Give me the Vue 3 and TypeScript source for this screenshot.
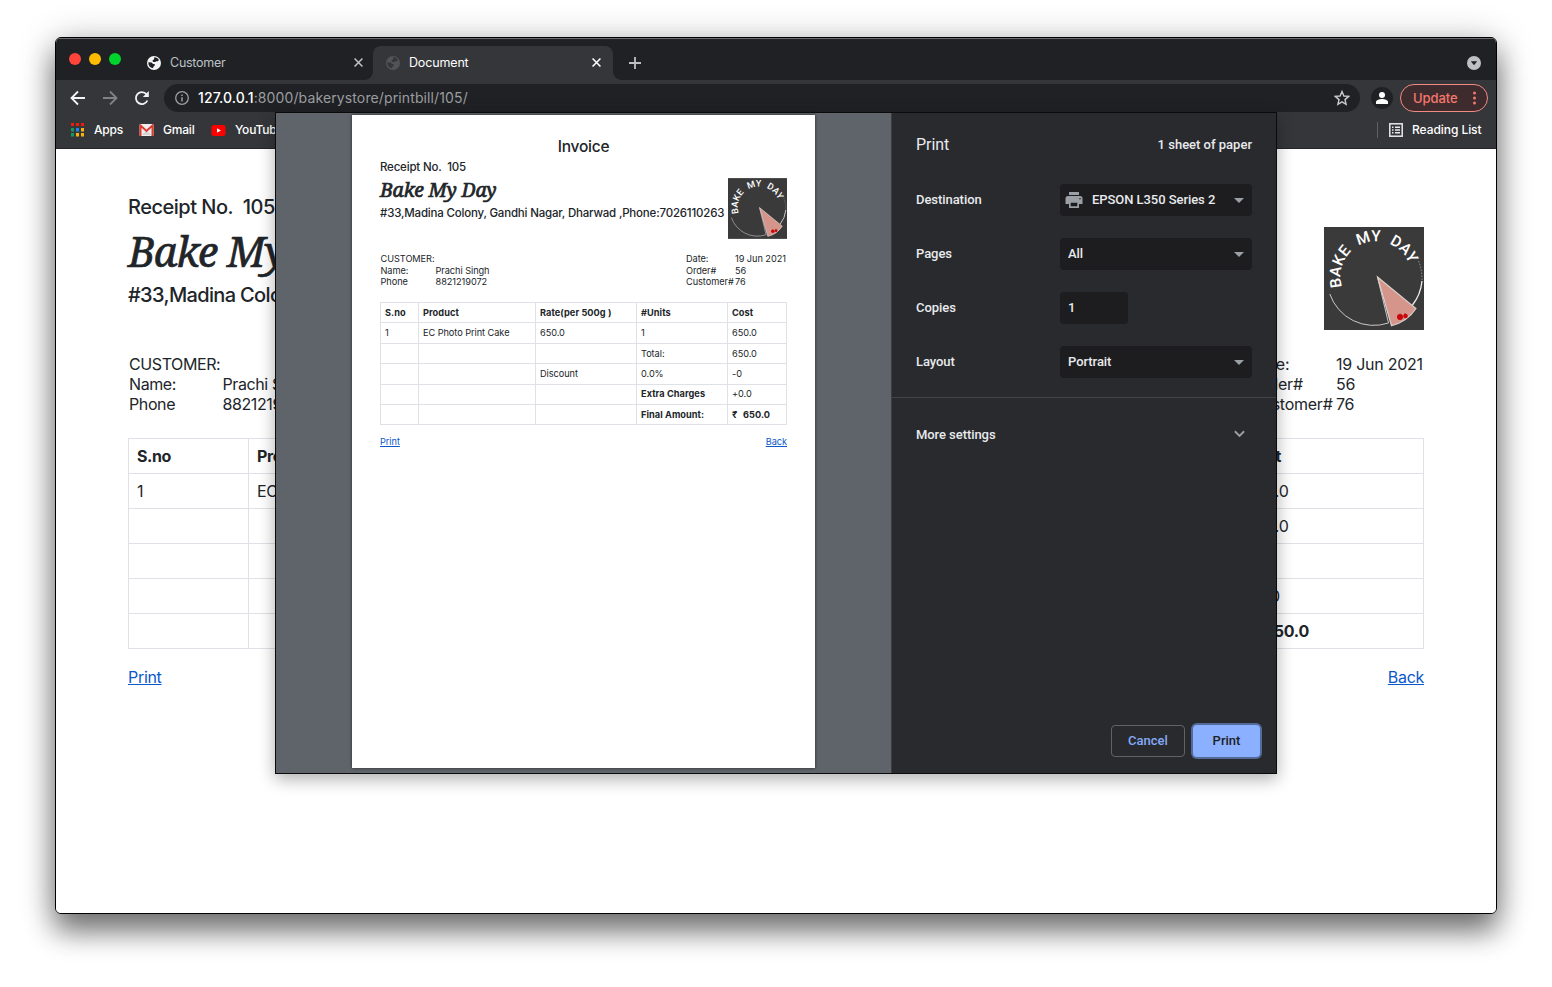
<script setup lang="ts">
interface Row {
  cells: string[]
  bold?: number[]
}

const header = ['S.no', 'Product', 'Rate(per 500g )', '#Units', 'Cost']
const rows: Row[] = [
  { cells: ['1', 'EC Photo Print Cake', '650.0', '1', '650.0'] },
  { cells: ['', '', '', 'Total:', '650.0'] },
  { cells: ['', '', 'Discount', '0.0%', '-0'] },
  { cells: ['', '', '', 'Extra Charges', '+0.0'], bold: [3] },
  { cells: ['', '', '', 'Final Amount:', '₹ 650.0'], bold: [3, 4] },
]
const customer = [
  ['Name:', 'Prachi Singh'],
  ['Phone', '8821219072'],
]
const order = [
  ['Date:', '19 Jun 2021'],
  ['Order#', '56'],
  ['Customer#', '76'],
]
const address = '#33,Madina Colony, Gandhi Nagar, Dharwad ,Phone:7026110263'
const copies = ['full', 'sheet']
</script>

<template>
  <div class="desktop">
    <svg class="defs" width="0" height="0">
      <symbol id="globe" viewBox="0 0 14 14">
        <circle cx="7" cy="7" r="7" fill="currentColor" />
        <path class="land" d="M1.4 6.2 4.4 6.4c1 .2.8 1.5 2 1.5 1.4 0 1.6.5 1.4 1.3-.3 1-1.600.8-1.700 2.800C3.200 12 1.200 9.500 1.400 6.200Z M7.400 1.300c2 0 3.600 1.100 4.500 2.700-.4 1-1.300 1.500-2.300 1.300-.8-.2-1 .8-2.300.8C6 6.100 5.300 5.200 5.700 4.300c.3-.7 1.200-.5 1.500-1.300.2-.6-.4-1 .2-1.700Z" />
      </symbol>
      <symbol id="logo" viewBox="0 0 100 103">
        <rect width="100" height="103" fill="#3a3a3b" />
        <path id="arc" d="M18 60A35.500 35.500 0 1 1 87.500 50" fill="none" />
        <text class="logo-text"><textPath href="#arc">BAKE MY DAY</textPath></text>
        <path d="M5.800 67A46.500 46.500 0 0 0 64.500 96L53.500 50" fill="none" stroke="#c9c9c9" stroke-width="1" />
        <path d="M98 54A46 46 0 0 1 88.500 78" fill="none" stroke="#eee" stroke-width="1.300" />
        <path d="M94.500 34A46 46 0 0 1 98 54" fill="none" stroke="#999" stroke-width="1" stroke-dasharray="1.500 1.500" />
        <path d="M53.500 50 92 81.500Q83 95 67.500 98.700Z" fill="#d6958a" stroke="#d9d0cc" stroke-width="1.200" />
        <path d="M76 86.500l1 3M81 86l0 3" stroke="#82583f" stroke-width="1" />
        <circle cx="76" cy="90" r="3" fill="#c9060a" /><circle cx="81.500" cy="89" r="2.300" fill="#c9060a" />
      </symbol>
    </svg>

    <div class="window">
      <header class="tabs">
        <div class="lights"><i class="red"></i><i class="yellow"></i><i class="green"></i></div>
        <div class="tab">
          <svg class="favicon"><use href="#globe" /></svg><span>Customer</span>
          <svg class="x" viewBox="0 0 8 8"><path d="M.5.5 7.500 7.500M7.500.5.5 7.500" /></svg>
        </div>
        <div class="tab active">
          <svg class="favicon"><use href="#globe" /></svg><span>Document</span>
          <svg class="x" viewBox="0 0 8 8"><path d="M.5.5 7.500 7.500M7.500.5.5 7.500" /></svg>
        </div>
        <svg class="plus" viewBox="0 0 12 12"><path d="M6 0V12M0 6H12" /></svg>
        <svg class="search" viewBox="0 0 14 14"><circle cx="7" cy="7" r="7" fill="#bdc1c6" /><path d="M3.800 5.200h6.400L7 9.200Z" fill="#202124" /></svg>
      </header>

      <div class="toolbar">
        <svg class="nav" viewBox="0 0 16 16"><path d="M15 8H2M8 1.500 1.500 8 8 14.500" /></svg>
        <svg class="nav dim" viewBox="0 0 16 16"><path d="M1 8H14M8 1.500 14.500 8 8 14.500" /></svg>
        <svg class="nav" viewBox="0 0 16 16"><path d="M13.400 10.500A6 6 0 1 1 12.500 4.200L13.500 5.500" /><path d="M14.800 1V7H8.800Z" class="solid" /></svg>
        <div class="omnibox">
          <svg class="info" viewBox="0 0 14 14"><circle cx="7" cy="7" r="6.300" fill="none" stroke="#9aa0a6" stroke-width="1.300" /><path d="M7 6.200V10.500M7 3.500V5" stroke="#9aa0a6" stroke-width="1.500" /></svg>
          <span class="url"><b>127.0.0.1</b>:8000/bakerystore/printbill/105/</span>
          <svg class="star" viewBox="0 0 16 16"><path d="M8 1.500 9.900 6 14.700 6.400 11 9.600 12.100 14.300 8 11.800 3.900 14.300 5 9.600 1.300 6.400 6.100 6Z" /></svg>
        </div>
        <div class="avatar"><svg viewBox="0 0 12 12"><circle cx="6" cy="3" r="3" /><path d="M0 12V10C0 8 3.500 7 6 7s6 1 6 3v2Z" /></svg></div>
        <div class="update"><span>Update</span><svg viewBox="0 0 4 14"><circle cx="2" cy="2" r="1.500" /><circle cx="2" cy="7" r="1.500" /><circle cx="2" cy="12" r="1.500" /></svg></div>
      </div>

      <div class="bookmarks">
        <svg class="apps" viewBox="0 0 13 14">
          <path d="M0 0h3v3H0zM5 0h3v3H5zM10 0h3v3H10z" fill="#f11b0d" />
          <path d="M0 5h3v3.500H0zM0 10h3v3.500H0z" fill="#0f9d58" /><path d="M5 5h3v3.500H5z" fill="#1a83f0" />
          <path d="M10 5h3v3.500H10zM5 10h3v3.500H5zM10 10h3v3.500H10z" fill="#f9b208" />
        </svg>
        <span class="apps-label">Apps</span>
        <svg class="gmail" viewBox="0 0 14 12"><rect width="14" height="12" rx="1" fill="#eee" /><path d="M2 11 7 6.500l5 4.500Z" fill="#d5d5d5" /><path d="M1 12V1.500L7 7l6-5.500V12" fill="none" stroke="#dd3a2f" stroke-width="2" /></svg>
        <span class="gmail-label">Gmail</span>
        <svg class="youtube" viewBox="0 0 14 11"><rect width="14" height="11" rx="2.500" fill="#f00" /><path d="M5.500 3.200v4.600l4-2.300Z" fill="#fff" /></svg>
        <span class="youtube-label">YouTube</span>
        <i class="divider"></i>
        <svg class="list" viewBox="0 0 14 14"><rect x=".8" y=".8" width="12.400" height="12.400" fill="none" stroke="#e8eaed" stroke-width="1.500" /><path d="M3 4.200h1.500M6 4.200h5M3 7h1.500M6 7h5M3 9.800h1.500M6 9.800h5" stroke="#e8eaed" stroke-width="1.400" /></svg>
        <span class="reading">Reading List</span>
      </div>

      <main class="page"></main>
    </div>

    <article v-for="copy in copies" :key="copy" class="invoice" :class="copy">
      <h4 v-if="copy === 'sheet'" class="title">Invoice</h4>
      <section class="head">
        <div>
          <p class="receipt">Receipt No.&nbsp; 105</p>
          <h1>Bake My Day</h1>
          <p class="address">{{ address }}</p>
        </div>
        <svg class="logo" preserveAspectRatio="none"><use href="#logo" /></svg>
      </section>
      <section class="meta">
        <div class="info-grid left">
          <span class="upper">CUSTOMER:</span><span></span>
          <template v-for="c in customer" :key="c[0]"><span>{{ c[0] }}</span><span>{{ c[1] }}</span></template>
        </div>
        <div class="info-grid right">
          <template v-for="o in order" :key="o[0]"><span>{{ o[0] }}</span><span>{{ o[1] }}</span></template>
        </div>
      </section>
      <table>
        <colgroup><col v-for="n in 5" :key="n" :class="'c' + n" /></colgroup>
        <tbody>
          <tr><th v-for="h in header" :key="h">{{ h }}</th></tr>
          <tr v-for="(r, i) in rows" :key="i">
            <td v-for="(cell, j) in r.cells" :key="j" :class="{ strong: r.bold?.includes(j), total: j === 4 }">{{ cell }}</td>
          </tr>
        </tbody>
      </table>
      <footer class="links"><a>Print</a><a>Back</a></footer>
    </article>

    <div class="dialog">
      <div class="preview"></div>
      <aside class="panel">
        <div class="row top"><span class="heading">Print</span><span class="sheets">1 sheet of paper</span></div>
        <div class="row"><label>Destination</label>
          <div class="field">
            <svg class="printer" viewBox="0 0 18 16"><path d="M4 0h10v3H4zM3 4h12a2.500 2.500 0 0 1 2.500 2.500V12H14V9H4v3H.5V6.500A2.500 2.500 0 0 1 3 4Z" /><path d="M4 9h10v7H4Zm1.700 1.700v3.600h6.600v-3.600Z" fill-rule="evenodd" /><circle cx="15" cy="6.800" r=".8" fill="#202124" /></svg>
            <span>EPSON L350 Series 2</span><i class="caret"></i>
          </div>
        </div>
        <div class="row"><label>Pages</label><div class="field"><span>All</span><i class="caret"></i></div></div>
        <div class="row"><label>Copies</label><div class="field small"><span>1</span></div></div>
        <div class="row"><label>Layout</label><div class="field"><span>Portrait</span><i class="caret"></i></div></div>
        <div class="more"><span>More settings</span><svg viewBox="0 0 10 7"><path d="M.8 1 5 5.200 9.200 1" /></svg></div>
        <div class="actions"><button class="cancel">Cancel</button><button class="print">Print</button></div>
      </aside>
    </div>
  </div>
</template>

<style>
html, body { margin: 0; background: #fff; overflow: hidden; }
</style>

<style scoped>
* { box-sizing: border-box; }
p, h1, h4 { margin: 0; }
.desktop { position: relative; width: 1552px; height: 987px; padding: 37px 55px; overflow: hidden; font-family: Inter, "Liberation Sans", sans-serif; }
.defs { position: absolute; }
.window { display: flex; flex-direction: column; width: 1442px; height: 877px; border: 1px solid #000; border-radius: 6px; overflow: hidden; background: #fff; box-shadow: 0 18px 28px rgba(0, 0, 0, .46), 0 4px 36px rgba(0, 0, 0, .28); }
.tabs { display: flex; height: 42px; flex: none; padding: 7px 15px 0 13px; background: #202124; border-top: 1px solid #6c6d70; }
.lights { display: flex; gap: 8px; width: 65px; padding-top: 7px; }
.lights i { width: 12px; height: 12px; border-radius: 50%; }
.red { background: #ff443a; }
.yellow { background: #fdbc02; }
.green { background: #00d32c; }
.tab { display: flex; align-items: center; width: 239px; height: 34px; padding: 0 10px 1px 13px; border-radius: 8px 8px 0 0; color: #bdc1c6; font-size: 12.5px; letter-spacing: -.25px; }
.tab span { flex: 1; padding-left: 9px; }
.tab.active { position: relative; width: 240px; padding-right: 12px; background: #35363a; color: #fff; letter-spacing: -.15px; }
.tab.active::before, .tab.active::after { content: ""; position: absolute; bottom: 0; width: 8px; height: 8px; }
.tab.active::before { left: -8px; background: radial-gradient(circle at 0 0, transparent 7.500px, #35363a 8px); }
.tab.active::after { right: -8px; background: radial-gradient(circle at 100% 0, transparent 7.500px, #35363a 8px); }
.favicon { width: 14px; height: 14px; color: #f4f4f4; --land: #202124; }
.active .favicon { color: #515357; --land: #35363a; }
.land { fill: var(--land); }
.x { width: 9px; height: 9px; fill: none; stroke: currentColor; stroke-width: 1.400; }
.plus { width: 12px; height: 12px; margin: 11px 0 0 16px; stroke: #bdc1c6; stroke-width: 1.800; }
.search { width: 14px; height: 14px; margin: 10px 0 0 auto; }
.toolbar { display: flex; align-items: center; height: 36px; flex: none; padding: 0 8px 0 14px; background: #35363a; }
.nav { width: 16px; height: 16px; margin-right: 16px; fill: none; stroke: #f1f3f4; stroke-width: 1.800; }
.nav.dim { stroke: #818285; }
.nav .solid { fill: #f1f3f4; stroke: none; }
.omnibox { display: flex; align-items: center; width: 1196px; height: 28px; margin-left: -2px; padding: 0 10px 0 11px; border-radius: 14px; background: #202124; }
.info { width: 14px; height: 14px; }
.url { flex: 1; padding: 0 0 1px 9px; font-size: 14px; color: #9b9da0; letter-spacing: .12px; }
.url b { font-weight: 500; color: #fff; }
.star { width: 16px; height: 16px; fill: none; stroke: #c8cacd; stroke-width: 1.400; }
.avatar { display: flex; align-items: center; justify-content: center; width: 22px; height: 22px; margin-left: 11px; border-radius: 50%; background: #202124; fill: #fff; }
.avatar svg { width: 12px; height: 12px; }
.update { display: flex; align-items: center; width: 88px; height: 28px; margin-left: 7px; padding: 0 10px 0 12px; border: 1px solid #f28b82; border-radius: 14px; background: #3e2b2e; color: #f5776d; font-size: 13px; font-weight: 500; }
.update span { flex: 1; letter-spacing: -.1px; }
.update svg { width: 5px; height: 14px; fill: #f5776d; }
.bookmarks { display: flex; align-items: center; height: 33px; flex: none; padding: 0 13px 4px 15px; background: #35363a; border-bottom: 1px solid #242528; color: #fff; font-size: 12px; font-weight: 500; }
.bookmarks span { padding-bottom: 2px; letter-spacing: -.2px; }
.bookmarks svg { flex: none; }
.apps { width: 13px; height: 14px; }
.apps-label { width: 45px; margin-left: 10px; }
.gmail { width: 15px; height: 12px; }
.gmail-label { width: 48px; margin-left: 9px; }
.youtube { width: 15px; height: 11px; }
.youtube-label { margin-left: 9px; }
.divider { width: 1px; height: 16px; margin-left: auto; background: #5f6165; }
.list { width: 14px; height: 14px; margin-left: 11px; }
.bookmarks .reading { width: 71px; margin-left: 9px; white-space: nowrap; letter-spacing: -.06px; }
.page { flex: 1; background: #fff; }

.invoice { position: absolute; color: #212529; white-space: nowrap; }
.full { left: 128px; top: 192px; width: 1296px; font-size: 16px; letter-spacing: -.4px; }
.sheet { z-index: 3; left: 352px; top: 115px; width: 463px; height: 653px; padding: 20px 28px 0; background: #fff; box-shadow: 0 0 3px rgba(0, 0, 0, .6); font-size: 9.200px; letter-spacing: -.05px; }
.title { height: 23px; line-height: 23px; font-size: 15.500px; font-weight: 500; text-align: center; letter-spacing: -.25px; }
.head { display: flex; justify-content: space-between; }
.receipt, .address { font-weight: 500; }
.full .receipt, .full .address { font-size: 20px; line-height: 30px; letter-spacing: -.5px; }
.full .address { letter-spacing: -.65px; }
.full h1 { height: 58px; line-height: 59px; font-size: 41px; letter-spacing: -1px; -webkit-text-stroke: .7px #212529; }
h1 { font-family: "Noto Serif", "DejaVu Serif Condensed", "DejaVu Serif", serif; font-style: italic; font-weight: 400; }
.full .logo { width: 100px; height: 103px; margin-top: 35px; }
.logo-text { font: 500 15.500px Roboto, sans-serif; fill: #fff; letter-spacing: .15px; word-spacing: 4.500px; }
.sheet .receipt, .sheet .address { height: 18px; line-height: 18px; font-size: 11.500px; letter-spacing: -.19px; }
.sheet h1 { height: 28px; line-height: 28px; font-size: 19.500px; letter-spacing: -.2px; -webkit-text-stroke: .7px #212529; }
.sheet .logo { flex: none; width: 59px; height: 61px; margin-top: 20px; }
.meta { display: flex; justify-content: space-between; }
.full .meta { margin-top: 24px; }
.sheet .meta { margin-top: 14px; }
.info-grid { display: grid; align-content: start; }
.full .info-grid { grid-auto-rows: 20px; line-height: 20px; }
.full .left { grid-template-columns: 93.500px auto; padding-left: 1px; }
.full .right { grid-template-columns: 85px 88px; letter-spacing: -.25px; }
.sheet .info-grid { grid-auto-rows: 11.700px; line-height: 11.700px; }
.sheet .left { grid-template-columns: 55px auto; padding-left: .5px; }
.sheet .right { grid-template-columns: 49px 52px; }
table { width: calc(100% - 1px); table-layout: fixed; border-collapse: collapse; }
td, th { border: 1px solid #dee2e6; text-align: left; padding: 0 8px; overflow: visible; }
th, .strong { font-weight: 700; }
.full table { margin-top: 24px; }
.full tr { height: 35px; }
.full .c1 { width: 120px; }
.full .c2 { width: 380px; }
.full .c3 { width: 321px; }
.full .c4 { width: 288px; }
.full .c5 { width: 186px; }
.full .total { letter-spacing: -.2px; }
.full .strong.total { word-spacing: 5px; }
.sheet table { margin-top: 14px; }
.sheet tr { height: 20.400px; }
.sheet td, .sheet th { padding: 0 4px; line-height: 12px; }
.sheet th, .sheet .strong { letter-spacing: .06px; }
.sheet .strong.total { word-spacing: 3.500px; }
.sheet .c1 { width: 38px; }
.sheet .c2 { width: 117px; }
.sheet .c3 { width: 101px; }
.sheet .c4 { width: 91px; }
.sheet .c5 { width: 59px; }
.links { display: flex; justify-content: space-between; color: #0a58ca; text-decoration: underline; }
.full .links { margin-top: 18px; line-height: 20px; letter-spacing: -.3px; }
.sheet .links { margin-top: 11px; line-height: 12px; color: #0a58ca; }

.dialog { position: absolute; z-index: 2; left: 275px; top: 112px; display: flex; width: 1002px; height: 662px; border: 1px solid #0b0b0c; box-shadow: 0 5px 16px rgba(0, 0, 0, .32); font-family: Roboto, sans-serif; font-size: 13px; font-weight: 500; color: #e8eaed; letter-spacing: -.06px; }
.preview { width: 615px; background: #5f636a; }
.panel { display: flex; flex-direction: column; width: 385px; background: #292a2d; border-left: 1px solid #3d3e42; }
.row { display: flex; align-items: center; height: 54px; padding: 0 24px; }
.row.top { height: 60px; padding-top: 2px; justify-content: space-between; }
.heading { font-size: 16px; font-weight: 400; }
.sheets { letter-spacing: 0; }
label { width: 144px; padding-bottom: 2px; }
.field { display: flex; align-items: center; width: 192px; height: 32px; padding: 0 8px; border-radius: 4px; background: #1d1d1f; }
.field.small { width: 68px; }
.field span { flex: 1; padding-bottom: 2px; white-space: nowrap; }
.printer { width: 18px; height: 16px; margin: 0 9px 0 -3px; fill: #9aa0a6; }
.caret { border: 5px solid transparent; border-top-color: #9aa0a6; border-bottom: 0; }
.more { display: flex; align-items: center; justify-content: space-between; height: 75px; margin-top: 8px; padding: 0 31px 2px 24px; border-top: 1px solid #434447; }
.more svg { width: 11px; height: 8px; fill: none; stroke: #9aa0a6; stroke-width: 1.700; }
.actions { display: flex; justify-content: flex-end; gap: 8px; margin-top: auto; padding: 0 16px 16px; }
button { height: 32px; padding: 0 0 2px; border-radius: 4px; font: 500 13px Roboto, sans-serif; }
.cancel { width: 74px; border: 1px solid #5f6368; background: transparent; color: #84abf8; }
.print { width: 67px; border: 0; background: #8ab0ff; color: #202124; box-shadow: 0 0 0 2px #526b9b; }
</style>
